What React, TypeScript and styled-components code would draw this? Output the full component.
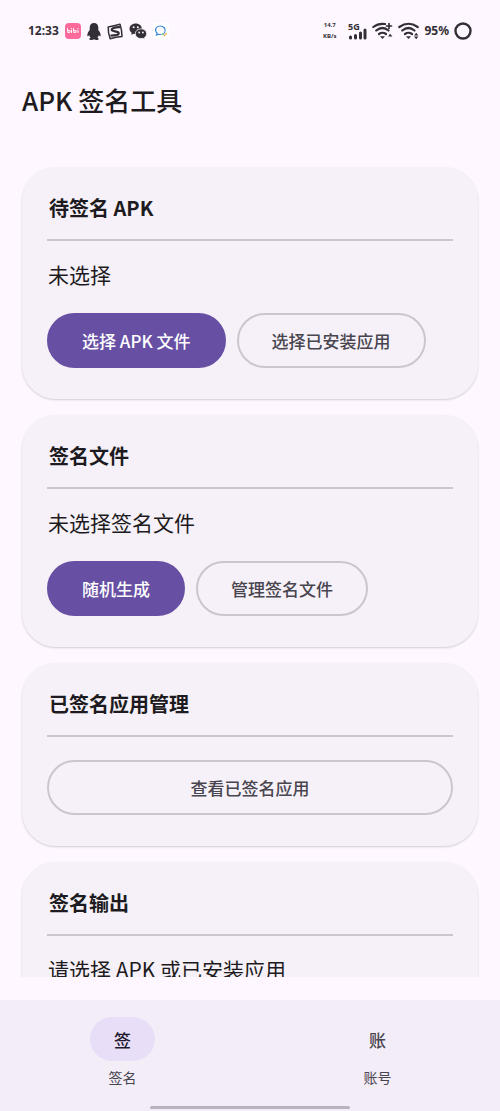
import React from "react";
import styled, { createGlobalStyle, css } from "styled-components";

const GlobalStyle = createGlobalStyle`
  * { box-sizing: border-box; }
  body {
    margin: 0;
    background: #fef7ff;
    color: #1d1b20;
    font-family: "Noto Sans CJK SC", sans-serif;
  }
`;

const Screen = styled.div`
  display: flex;
  flex-direction: column;
  height: 100vh;
  overflow: hidden;
`;

const StatusBar = styled.div`
  display: flex;
  align-items: center;
  justify-content: space-between;
  height: 62px;
  flex: none;
  padding: 0 28px;
  color: #332f36;
`;

const StatusGroup = styled.div<{ $gap: number }>`
  display: flex;
  align-items: center;
  gap: ${(p) => p.$gap}px;
`;

const StatusText = styled.span`
  font: 700 12px/20px "Noto Sans", sans-serif;
`;

const NetSpeed = styled.span`
  display: flex;
  flex-direction: column;
  align-items: center;
  margin-right: 6px;
  font: 700 6px/11px "Noto Sans", sans-serif;
`;

const Header = styled.header`
  flex: none;
  padding: 18px 22px 47px;
`;

const PageTitle = styled.h1`
  margin: 0;
  font-size: 26px;
  line-height: 40px;
  font-weight: 500;
`;

const Content = styled.main`
  display: flex;
  flex-direction: column;
  gap: 16px;
  flex: 1;
  min-height: 0;
  margin-bottom: 23px;
  padding: 0 22px;
  overflow-y: auto;
  scrollbar-width: none;
`;

const Card = styled.section`
  flex: none;
  padding: 25px 25px 31px;
  border-radius: 34px;
  background: #f6f1f9;
  box-shadow: 0 1px 2px rgba(60, 50, 70, 0.22);
`;

const CardTitle = styled.h2`
  margin: 0;
  padding: 0 2px 15px;
  border-bottom: 2px solid #cbc5d0;
  font-size: 20px;
  line-height: 32px;
  font-weight: 700;
`;

const CardText = styled.p`
  margin: 17px 0 0;
  padding: 0 1px;
  font-size: 21px;
  line-height: 32px;
`;

const Actions = styled.div`
  display: flex;
  gap: 11px;
  margin-top: 23px;
`;

const Button = styled.button<{ $primary?: boolean; $wide?: boolean }>`
  height: 55px;
  padding: 0 33px;
  border: 2px solid #cbc5d0;
  border-radius: 28px;
  background: transparent;
  color: #49454f;
  font-family: inherit;
  font-size: 17px;
  line-height: 24px;
  font-weight: 500;
  white-space: nowrap;
  ${(p) => p.$wide && css`flex: 1;`}
  ${(p) =>
    p.$primary &&
    css`
      border-color: #6750a4;
      background: #6750a4;
      color: #ffffff;
    `}
`;

const BottomNav = styled.nav`
  display: flex;
  gap: 10px;
  flex: none;
  height: 111px;
  padding: 17px 0 0;
  background: #f3edf7;
  position: relative;
`;

const NavItem = styled.button`
  display: flex;
  flex: 1;
  flex-direction: column;
  align-items: center;
  gap: 6px;
  padding: 0 12px;
  border: 0;
  background: none;
  color: #49454f;
  font-family: inherit;
`;

const NavGlyph = styled.span<{ $active?: boolean }>`
  display: flex;
  align-items: center;
  justify-content: center;
  width: 65px;
  height: 44px;
  border-radius: 22px;
  background: ${(p) => (p.$active ? "#e8def8" : "transparent")};
  color: ${(p) => (p.$active ? "#1d192b" : "#49454f")};
  font-size: 17px;
  font-weight: 500;
`;

const NavLabel = styled.span`
  font-size: 14px;
  line-height: 20px;
`;

const HomeIndicator = styled.div`
  position: absolute;
  bottom: 2px;
  left: 50%;
  width: 40%;
  height: 3px;
  border-radius: 2px;
  background: #b9b3bd;
  transform: translateX(-50%);
`;

const BiliIcon = () => (
  <svg width="16" height="16" viewBox="0 0 16 16" aria-hidden="true">
    <rect width="16" height="16" rx="4" fill="#fb6a9a" />
    <g fill="none" stroke="#fff" strokeLinecap="round" strokeLinejoin="round">
      <path d="M2.500 5.500l.3 4h2l.4-1.800-2.300-.1M6.500 7.500v2M6.400 5.500v.4" />
      <path d="M8.500 5.500l.3 4h2l.4-1.800-2.300-.1M13 7.500v2M12.900 5.500v.4" />
    </g>
  </svg>
);

const PenguinIcon = () => (
  <svg width="14" height="17" viewBox="0 0 14 17" fill="#332f36" aria-hidden="true">
    <path d="M7 0C4.300 0 2.700 2 2.700 4.600V7C1.400 8.600.3 10.500.3 12.200c0 1.100.6 1.200 1.100.7l.7-.8c.3 1.100.8 1.900 1.500 2.600-.9.300-1.300.7-1.300 1.200 0 .7 1 1.100 2.300 1.100 1 0 1.900-.3 2.400-.7.500.4 1.400.7 2.400.7 1.300 0 2.300-.4 2.300-1.100 0-.5-.4-.9-1.300-1.200.7-.7 1.200-1.500 1.500-2.600l.7.8c.5.5 1.100.4 1.100-.7 0-1.700-1.100-3.600-2.400-5.200V4.600C11.300 2 9.700 0 7 0z" />
  </svg>
);

const SogouIcon = () => (
  <svg width="16" height="17" viewBox="0 0 16 17" aria-hidden="true">
    <path d="M1.200 4Q7 3 13 1.200Q15 7 15 13.500Q9 14 3.200 15.800Q1 10 1.200 4z" fill="none" stroke="#332f36" strokeWidth="1.500" strokeLinejoin="round" />
    <path d="M13 4.200C8 4 4.500 5.300 4.800 7S11.500 8 11.700 10 8.500 12.400 3.500 12.600" fill="none" stroke="#332f36" strokeWidth="2.200" />
  </svg>
);

const WechatIcon = () => (
  <svg width="18" height="17" viewBox="0 0 18 17" aria-hidden="true">
    <path d="M6.700.5C3.200.5.5 2.800.5 5.800c0 1.700.9 3.200 2.300 4.200l-.6 2 2.300-1.200c.7.2 1.400.3 2.200.3 3.500 0 6.200-2.300 6.200-5.300S10.200.5 6.700.5z" fill="#332f36" />
    <circle cx="4.600" cy="4.300" r="1" fill="#fef7ff" />
    <circle cx="8.800" cy="4.300" r="1" fill="#fef7ff" />
    <path d="M12 5.800c-3.200 0-5.700 2.100-5.700 4.900s2.500 4.900 5.700 4.900c.7 0 1.300-.1 1.900-.3l2 1.100-.5-1.800c1.400-.9 2.300-2.300 2.300-3.900 0-2.800-2.500-4.900-5.700-4.900z" fill="#332f36" stroke="#fef7ff" strokeWidth=".8" />
    <circle cx="10.200" cy="9.500" r=".9" fill="#fef7ff" />
    <circle cx="13.900" cy="9.500" r=".9" fill="#fef7ff" />
  </svg>
);

const BubbleIcon = () => (
  <svg width="16" height="16" viewBox="0 0 16 16" aria-hidden="true">
    <rect width="16" height="16" rx="4" fill="#fff" />
    <path d="M8.500 11.300Q7 11.700 5.600 11.200L3.500 12l.5-2C.8 6.500 3.500 3 7 3s6 2.800 5 5.500" fill="none" stroke="#3b86d8" strokeWidth="1.200" />
    <path d="M11.500 8.500v2" stroke="#4a90e2" strokeWidth="1.300" />
    <path d="M9.200 11h1.800" stroke="#4db36b" strokeWidth="1.300" />
    <path d="M12 11h1.800" stroke="#f2b632" strokeWidth="1.300" />
    <path d="M11.500 11.500v1.800" stroke="#e8a04c" strokeWidth="1.300" />
  </svg>
);

const SignalIcon = () => (
  <svg width="20" height="22" viewBox="0 0 20 22" aria-label="5G">
    <text x="1" y="10" fontSize="9" fontWeight="700" fontFamily="Noto Sans, sans-serif" fill="#332f36">5G</text>
    <g stroke="#332f36" strokeWidth="3" strokeLinecap="round">
      <path d="M3.500 17v1M8.500 15.500v2.500M13.500 13v5M18 10v8" />
    </g>
  </svg>
);

const WifiIcon = ({ plus }: { plus?: boolean }) => (
  <svg width="21" height="18" viewBox="0 0 21 18" aria-hidden="true">
    <g fill="none" stroke="#332f36" strokeWidth="2.200" strokeLinecap="round">
      <path d={plus ? "M1.300 5Q6.500 1 13 2" : "M1.300 5Q10.500 -1.500 19.700 5"} />
      <path d="M4.200 8.500Q10.500 3.500 16.500 8.500" />
      <path d="M7 12Q10.500 9.500 14 12" />
      {plus && <path d="M17 1.500v5M14.500 4h5" strokeWidth="1.700" />}
    </g>
    <path d="M8 14.200h5L10.500 17z" fill="#332f36" />
    <path d={plus ? "M16 14.500l2.200-2.800 2.200 2.800z" : "M16 13.500l2.200-2.800 2.200 2.800zM16 14.500l2.200 2.800 2.200-2.800z"} fill="#332f36" />
  </svg>
);

const BatteryIcon = () => (
  <svg width="18" height="18" viewBox="0 0 18 18" aria-hidden="true">
    <circle cx="9" cy="9" r="7.500" fill="none" stroke="#332f36" strokeWidth="2.400" />
  </svg>
);

export default function App() {
  return (
    <Screen>
      <GlobalStyle />
      <StatusBar>
        <StatusGroup $gap={6}>
          <StatusText>12:33</StatusText>
          <BiliIcon />
          <PenguinIcon />
          <SogouIcon />
          <WechatIcon />
          <BubbleIcon />
        </StatusGroup>
        <StatusGroup $gap={5}>
          <NetSpeed>
            <span>14.7</span>
            <span>KB/s</span>
          </NetSpeed>
          <SignalIcon />
          <WifiIcon plus />
          <WifiIcon />
          <StatusText>95%</StatusText>
          <BatteryIcon />
        </StatusGroup>
      </StatusBar>
      <Header>
        <PageTitle>APK 签名工具</PageTitle>
      </Header>
      <Content>
        <Card>
          <CardTitle>待签名 APK</CardTitle>
          <CardText>未选择</CardText>
          <Actions>
            <Button $primary>选择 APK 文件</Button>
            <Button>选择已安装应用</Button>
          </Actions>
        </Card>
        <Card>
          <CardTitle>签名文件</CardTitle>
          <CardText>未选择签名文件</CardText>
          <Actions>
            <Button $primary>随机生成</Button>
            <Button>管理签名文件</Button>
          </Actions>
        </Card>
        <Card>
          <CardTitle>已签名应用管理</CardTitle>
          <Actions>
            <Button $wide>查看已签名应用</Button>
          </Actions>
        </Card>
        <Card>
          <CardTitle>签名输出</CardTitle>
          <CardText>请选择 APK 或已安装应用</CardText>
        </Card>
      </Content>
      <BottomNav>
        <NavItem>
          <NavGlyph $active>签</NavGlyph>
          <NavLabel>签名</NavLabel>
        </NavItem>
        <NavItem>
          <NavGlyph>账</NavGlyph>
          <NavLabel>账号</NavLabel>
        </NavItem>
        <HomeIndicator />
      </BottomNav>
    </Screen>
  );
}
